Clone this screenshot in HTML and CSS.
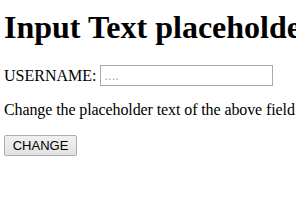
FILE: index.html
```html
<!DOCTYPE html>
<html lang="en">
  <head>
    <meta charset="UTF-8" />
    <title>Input Text placeholder</title>
    <link rel="stylesheet" href="styles.css">
  </head>
  <body>
    <h1>Input Text placeholder Property</h1>
    <form class="form">
      <span>USERNAME:</span>
      <input type="text" id="myText" placeholder="....">
    </form>
    <p>Change the placeholder text of the above field</p>
    <button type="button" class="change">CHANGE</button>
  </body>
</html>
```

FILE: styles.css
```css
body{
  margin: 4px;
  font-family: "Liberation Serif", serif;
  font-size: 16px;
  color: #000;
  white-space: nowrap;
  overflow: hidden;
}
h1{
  font-size: 32px;
  line-height: 36px;
  margin: 5px 0 0;
}
/* 입력 줄 */
.form{
  display: flex;
  align-items: center;
  gap: 4px;
  margin: 20px 0 0;
}
#myText{
  box-sizing: border-box;
  width: 173px;
  height: 21px;
  padding: 1px 3px;
  border: 1px solid #a9a9a9;
  font-family: "Liberation Sans", sans-serif;
  font-size: 13px;
}
#myText::placeholder{
  color: #a0a0a0;
}
p{
  line-height: 18px;
  margin: 15px 0 16px;
  letter-spacing: -0.1px;
}
/* 버튼 */
.change{
  display: block;
  box-sizing: border-box;
  width: 73px;
  height: 21px;
  padding: 0;
  border: 1px solid #acacac;
  border-radius: 2px;
  background: linear-gradient(#f0f0f0, #e2e2e2);
  font-family: "Liberation Sans", sans-serif;
  font-size: 13px;
  color: #000;
}
```
